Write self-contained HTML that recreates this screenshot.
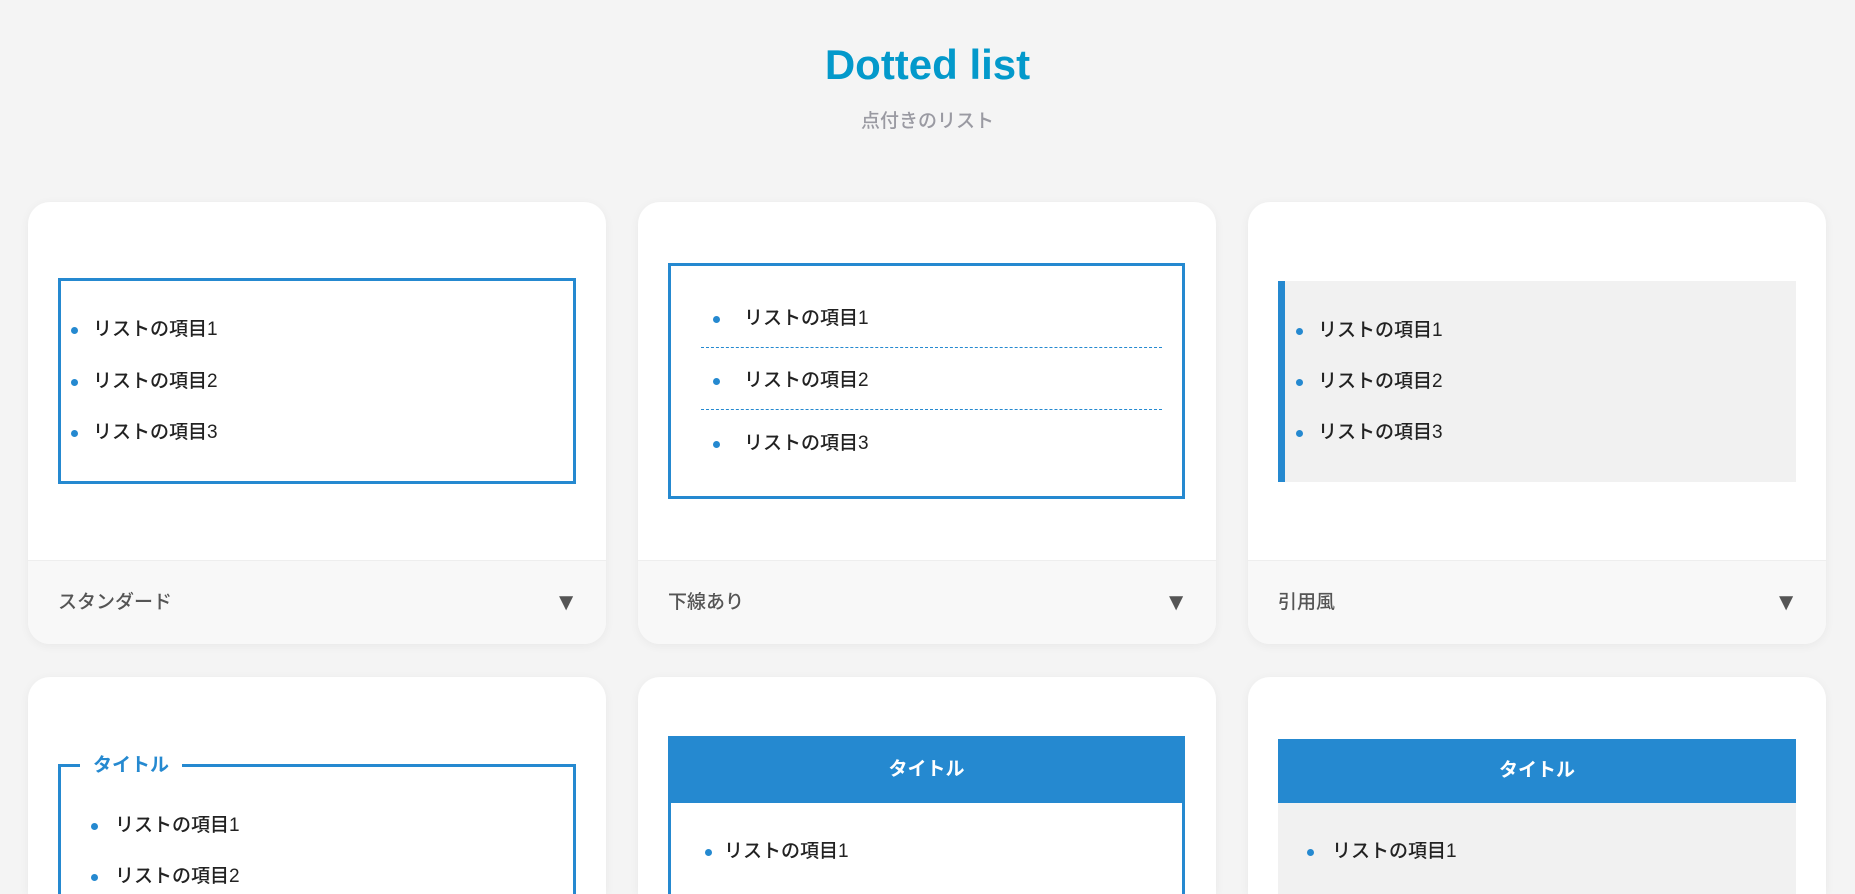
<!DOCTYPE html>
<html style="height:894px;overflow:hidden"><head><meta charset="utf-8">
<style>
*{box-sizing:border-box;margin:0;padding:0}
html,body{width:1855px;height:894px;overflow:hidden}
body{background:#f4f4f4;font-family:"Liberation Sans","Noto Sans CJK JP",sans-serif;position:relative;color:#333}
.h1{position:absolute;left:0;width:1855px;top:40px;text-align:center;font-size:42px;font-weight:bold;color:#0399cb;line-height:50px}
.sub{position:absolute;left:0;width:1855px;top:110px;text-align:center;font-size:19px;color:#9a9aa2;line-height:24px;font-weight:500}
.card{position:absolute;width:578px;height:442px;background:#fff;border-radius:22px;box-shadow:0 2px 10px rgba(0,0,0,0.05);overflow:hidden}
.card.b{height:217px;border-radius:22px 22px 0 0}
.foot{position:absolute;left:0;right:0;top:358px;height:84px;background:#f8f8f8;border-top:1px solid #eee;font-size:19px;color:#555;padding:0 30px;line-height:84px;font-weight:500}
.foot .ar{position:absolute;right:28px;top:0;font-size:24px;color:#555}
.abs{position:absolute}
.it{position:absolute;font-size:19px;line-height:24px;color:#222;white-space:nowrap;font-weight:500}
.dot{position:absolute;width:7px;height:7px;border-radius:50%;background:#2589d0}
</style></head><body>
<div class="h1">Dotted list</div>
<div class="sub">点付きのリスト</div>

<div class="card" style="left:28px;top:202px">
  <div class="abs" style="left:30px;top:76px;width:518px;height:206px;border:3px solid #2589d0"></div>
  <div class="dot" style="left:43px;top:125px"></div><div class="it" style="left:65px;top:116px">リストの項目1</div>
  <div class="dot" style="left:43px;top:177px"></div><div class="it" style="left:65px;top:168px">リストの項目2</div>
  <div class="dot" style="left:43px;top:228px"></div><div class="it" style="left:65px;top:219px">リストの項目3</div>
  <div class="foot">スタンダード<span class="ar">▼</span></div>
</div>

<div class="card" style="left:638px;top:202px">
  <div class="abs" style="left:30px;top:61px;width:517px;height:236px;border:3px solid #2589d0"></div>
  <div class="abs" style="left:63px;top:145px;width:461px;border-top:1px dashed #2589d0"></div>
  <div class="abs" style="left:63px;top:207px;width:461px;border-top:1px dashed #2589d0"></div>
  <div class="dot" style="left:75px;top:114px"></div><div class="it" style="left:106px;top:105px">リストの項目1</div>
  <div class="dot" style="left:75px;top:176px"></div><div class="it" style="left:106px;top:167px">リストの項目2</div>
  <div class="dot" style="left:75px;top:239px"></div><div class="it" style="left:106px;top:230px">リストの項目3</div>
  <div class="foot">下線あり<span class="ar">▼</span></div>
</div>

<div class="card" style="left:1248px;top:202px">
  <div class="abs" style="left:30px;top:79px;width:518px;height:201px;background:#f1f1f1;border-left:7px solid #2589d0"></div>
  <div class="dot" style="left:48px;top:126px"></div><div class="it" style="left:70px;top:117px">リストの項目1</div>
  <div class="dot" style="left:48px;top:177px"></div><div class="it" style="left:70px;top:168px">リストの項目2</div>
  <div class="dot" style="left:48px;top:228px"></div><div class="it" style="left:70px;top:219px">リストの項目3</div>
  <div class="foot">引用風<span class="ar">▼</span></div>
</div>

<div class="card b" style="left:28px;top:677px">
  <div class="abs" style="left:30px;top:87px;width:518px;height:300px;border:3px solid #2589d0"></div>
  <div class="abs" style="left:52px;top:77px;background:#fff;padding:0 13px;font-size:19px;font-weight:bold;color:#2589d0;line-height:24px">タイトル</div>
  <div class="dot" style="left:63px;top:146px"></div><div class="it" style="left:87px;top:137px">リストの項目1</div>
  <div class="dot" style="left:63px;top:197px"></div><div class="it" style="left:87px;top:188px">リストの項目2</div>
</div>

<div class="card b" style="left:638px;top:677px">
  <div class="abs" style="left:30px;top:59px;width:517px;height:300px;border:3px solid #2589d0"></div>
  <div class="abs" style="left:30px;top:59px;width:517px;height:67px;background:#2589d0;color:#fff;font-weight:bold;font-size:19px;text-align:center;line-height:67px">タイトル</div>
  <div class="dot" style="left:67px;top:172px"></div><div class="it" style="left:86px;top:163px">リストの項目1</div>
</div>

<div class="card b" style="left:1248px;top:677px">
  <div class="abs" style="left:30px;top:62px;width:518px;height:300px;background:#f1f1f1"></div>
  <div class="abs" style="left:30px;top:62px;width:518px;height:64px;background:#2589d0;color:#fff;font-weight:bold;font-size:19px;text-align:center;line-height:64px">タイトル</div>
  <div class="dot" style="left:59px;top:172px"></div><div class="it" style="left:84px;top:163px">リストの項目1</div>
</div>
</body></html>
